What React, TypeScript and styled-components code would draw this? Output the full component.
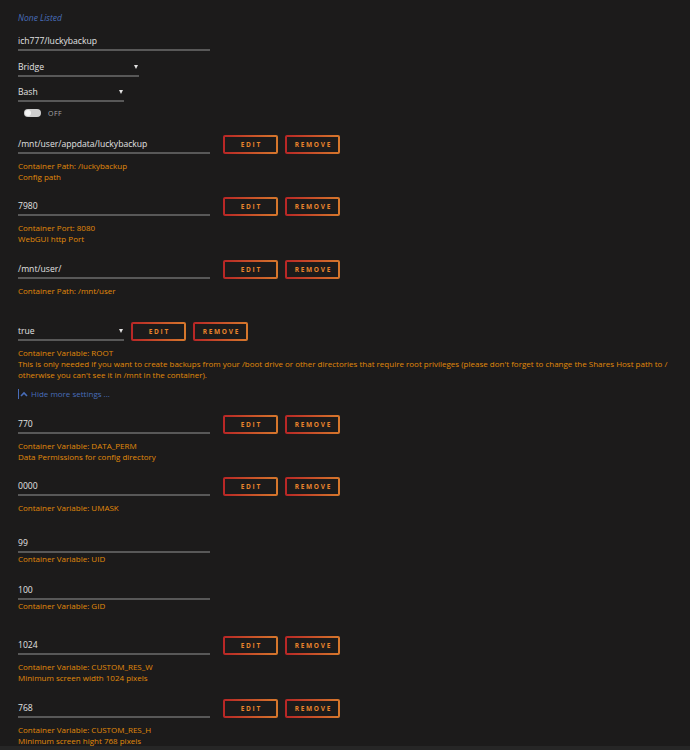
import React from "react";
import styled, { createGlobalStyle } from "styled-components";

const Global = createGlobalStyle`
  html, body { margin: 0; padding: 0; background: #1c1b1b; }
  body { font-family: "Open Sans", "Noto Sans", sans-serif; }
`;

const Page = styled.div`
  padding: 12px 0 0 18px;
  min-height: 750px;
  box-sizing: border-box;
  overflow: hidden;
`;

const NoneListed = styled.div`
  font-size: 8.5px;
  line-height: 12px;
  font-style: italic;
  color: #486dba;
`;

const Field = styled.div<{ $w: number; $mt?: number }>`
  width: ${(p) => p.$w}px;
  margin-top: ${(p) => p.$mt ?? 0}px;
  height: 19px;
  box-sizing: border-box;
  border-bottom: 2px solid #585858;
  display: flex;
  align-items: center;
  justify-content: space-between;
  font-size: 8.6px;
  color: #e2e2e2;
  flex-shrink: 0;
`;

const Arrow = styled.span`
  width: 0;
  height: 0;
  border-left: 2.5px solid transparent;
  border-right: 2.5px solid transparent;
  border-top: 4px solid #e2e2e2;
  margin-right: 1px;
`;

const ToggleRow = styled.div`
  margin-top: 7px;
  padding-left: 6px;
  display: flex;
  align-items: center;
  gap: 7px;
  height: 8px;
`;

const Switch = styled.div`
  width: 17px;
  height: 8px;
  border-radius: 4px;
  background: #cfcfcf;
  position: relative;
  &::after {
    content: "";
    position: absolute;
    left: 1px;
    top: 1px;
    width: 6px;
    height: 6px;
    border-radius: 50%;
    background: #f4f4f4;
  }
`;

const SwitchLabel = styled.span`
  font-size: 7px;
  letter-spacing: 0.5px;
  color: #a8a8a8;
`;

const Entries = styled.div`
  margin-top: 18px;
`;

const Entry = styled.div<{ $after: number }>`
  margin-bottom: ${(p) => p.$after}px;
`;

const Controls = styled.div<{ $gap: number }>`
  display: flex;
  align-items: flex-start;
  gap: ${(p) => p.$gap}px;
`;

const Buttons = styled.div`
  display: flex;
  gap: 7px;
`;

const Btn = styled.div`
  width: 55px;
  height: 19px;
  box-sizing: border-box;
  border: 2px solid transparent;
  border-radius: 2px;
  background: linear-gradient(#1c1b1b, #1c1b1b) padding-box,
    linear-gradient(90deg, #b82626, #d6782c) border-box;
  display: flex;
  align-items: center;
  justify-content: center;
  font-size: 6.5px;
  font-weight: 700;
  letter-spacing: 1.7px;
  padding-left: 1.7px;
  color: #e8842c;
`;

const Desc = styled.div<{ $compact?: boolean }>`
  margin-top: ${(p) => (p.$compact ? 0 : 6)}px;
  font-size: 8px;
  line-height: 11px;
  color: #e08a0a;
  white-space: nowrap;
`;

const HideMore = styled.div`
  display: flex;
  align-items: center;
  gap: 3px;
  font-size: 8px;
  line-height: 11px;
  color: #486dba;
  margin-bottom: 16px;
`;

const Footer = styled.div`
  height: 20px;
  margin-left: -18px;
  background: #262626;
`;

type Item = {
  value: string;
  select?: number;
  buttons?: boolean;
  lines: string[];
  after: number;
};

const items: Item[] = [
  { value: "/mnt/user/appdata/luckybackup", buttons: true, lines: ["Container Path: /luckybackup", "Config path"], after: 15 },
  { value: "7980", buttons: true, lines: ["Container Port: 8080", "WebGUI http Port"], after: 16 },
  { value: "/mnt/user/", buttons: true, lines: ["Container Path: /mnt/user"], after: 26 },
  {
    value: "true",
    select: 106,
    buttons: true,
    lines: [
      "Container Variable: ROOT",
      "This is only needed if you want to create backups from your /boot drive or other directories that require root privileges (please don't forget to change the Shares Host path to /",
      "otherwise you can't see it in /mnt in the container).",
    ],
    after: 8,
  },
];

const items2: Item[] = [
  { value: "770", buttons: true, lines: ["Container Variable: DATA_PERM", "Data Permissions for config directory"], after: 15 },
  { value: "0000", buttons: true, lines: ["Container Variable: UMASK"], after: 21 },
  { value: "99", lines: ["Container Variable: UID"], after: 17 },
  { value: "100", lines: ["Container Variable: GID"], after: 25 },
  { value: "1024", buttons: true, lines: ["Container Variable: CUSTOM_RES_W", "Minimum screen width 1024 pixels"], after: 16 },
  { value: "768", buttons: true, lines: ["Container Variable: CUSTOM_RES_H", "Minimum screen hight 768 pixels"], after: 0 },
];

function Row({ it }: { it: Item }) {
  return (
    <Entry $after={it.after}>
      <Controls $gap={it.select ? 7 : 13}>
        <Field $w={it.select ?? 192}>
          <span>{it.value}</span>
          {it.select ? <Arrow /> : null}
        </Field>
        {it.buttons ? (
          <Buttons>
            <Btn>EDIT</Btn>
            <Btn>REMOVE</Btn>
          </Buttons>
        ) : null}
      </Controls>
      <Desc $compact={!it.buttons}>
        {it.lines.map((l, i) => (
          <div key={i}>{l}</div>
        ))}
      </Desc>
    </Entry>
  );
}

export default function App() {
  return (
    <>
      <Global />
      <Page>
        <NoneListed>None Listed</NoneListed>
        <Field $w={192} $mt={8}>
          <span>ich777/luckybackup</span>
        </Field>
        <Field $w={121} $mt={7}>
          <span>Bridge</span>
          <Arrow />
        </Field>
        <Field $w={106} $mt={6}>
          <span>Bash</span>
          <Arrow />
        </Field>
        <ToggleRow>
          <Switch />
          <SwitchLabel>OFF</SwitchLabel>
        </ToggleRow>
        <Entries>
          {items.map((it, i) => (
            <Row key={i} it={it} />
          ))}
          <HideMore>
            <svg width="10" height="10" viewBox="0 0 10 10">
              <line x1="0.5" y1="0" x2="0.5" y2="10" stroke="#486dba" strokeWidth="1" />
              <polyline points="3,7 6,4 9,7" fill="none" stroke="#486dba" strokeWidth="1.6" />
            </svg>
            <span>Hide more settings ...</span>
          </HideMore>
          {items2.map((it, i) => (
            <Row key={i} it={it} />
          ))}
        </Entries>
        <Footer />
      </Page>
    </>
  );
}
